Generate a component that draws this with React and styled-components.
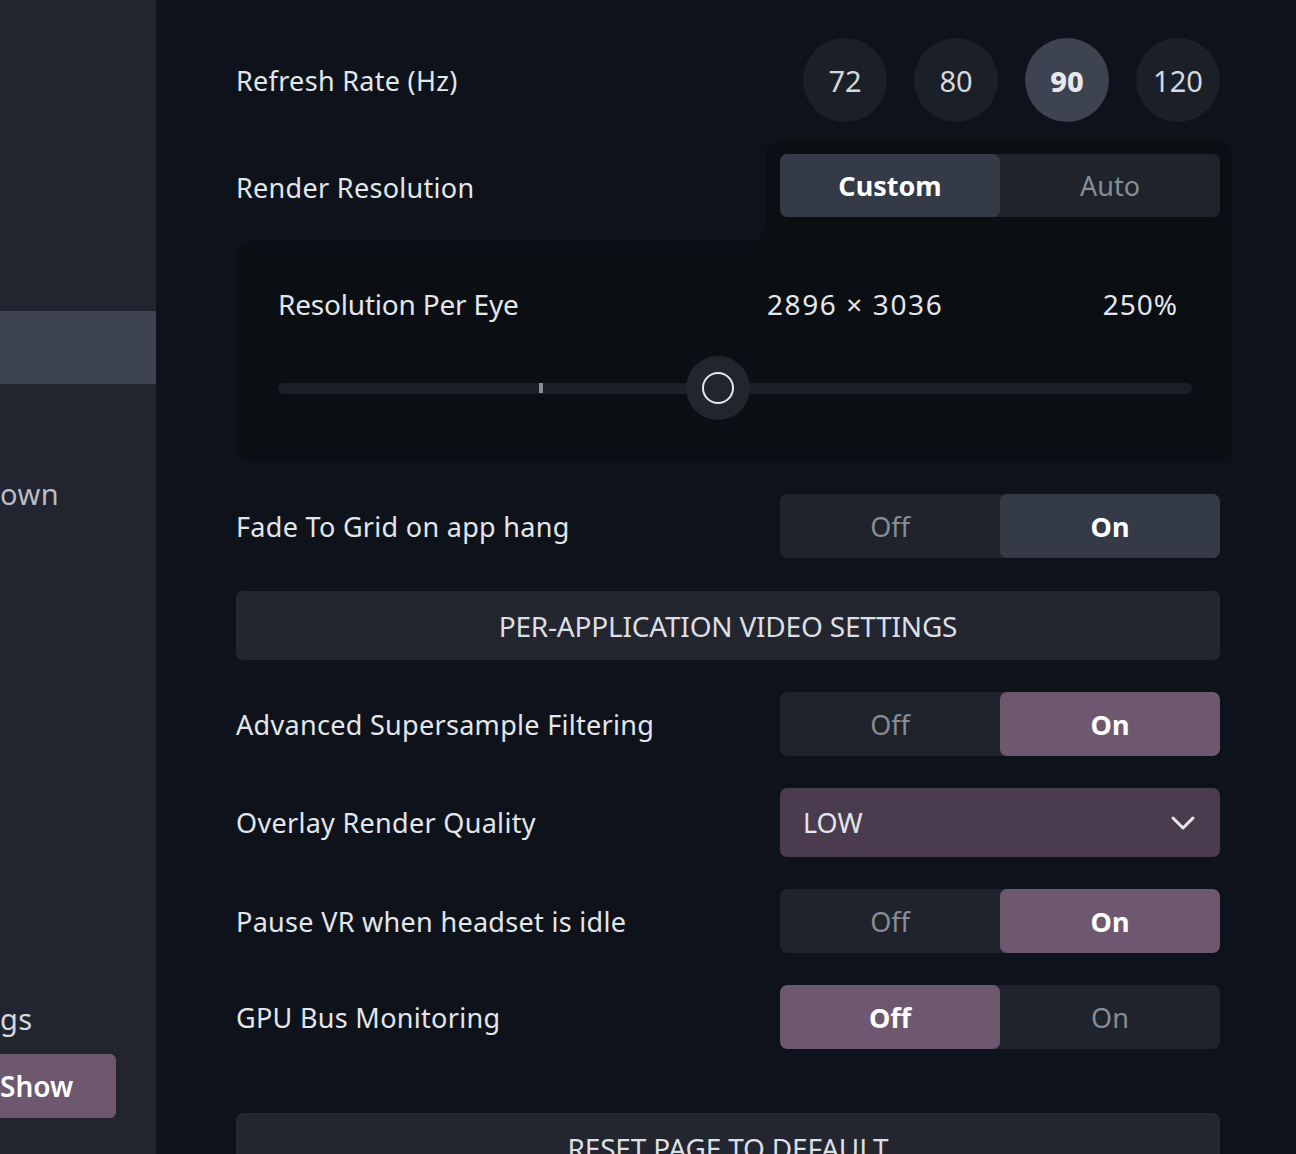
import React from 'react'
import styled, { createGlobalStyle } from 'styled-components'

const GlobalStyle = createGlobalStyle`
	html, body {
		margin: 0;
		padding: 0;
		background: #0e131b;
	}
	body {
		font-family: 'Noto Sans', 'Open Sans', sans-serif;
		color: #e3e6ea;
	}
`

const Page = styled.div`
	display: flex;
	width: 1296px;
	height: 1154px;
	overflow: hidden;
	background: #0e131b;
`

const Sidebar = styled.div`
	width: 156px;
	flex-shrink: 0;
	background: #22252f;
	display: flex;
	flex-direction: column;
	overflow: hidden;
`

const SideItem = styled.div`
	flex-shrink: 0;
	height: ${props => props.h || 73}px;
	background: ${props => (props.active ? '#3d4350' : 'transparent')};
	color: ${props => props.color || '#b9bdc5'};
	font-size: 29px;
	letter-spacing: 0.5px;
	display: flex;
	align-items: center;
	white-space: nowrap;
`

const ShowButton = styled.div`
	flex-shrink: 0;
	width: 116px;
	height: 64px;
	border-radius: 0 6px 6px 0;
	background: #6d586f;
	color: #ffffff;
	font-size: 28px;
	font-weight: 600;
	display: flex;
	align-items: center;
`

const Content = styled.div`
	width: 984px;
	padding: 38px 0 0 80px;
	display: flex;
	flex-direction: column;

	& > * {
		flex-shrink: 0;
	}
`

const Row = styled.div`
	display: flex;
	align-items: center;
	justify-content: space-between;
	margin-bottom: ${props => props.mb ?? 32}px;
`

const Label = styled.div`
	font-size: 27px;
	color: #e3e6ea;
	letter-spacing: 0.3px;
`

const Rates = styled.div`
	display: flex;
	gap: 27px;
`

const Rate = styled.div`
	width: 84px;
	height: 84px;
	border-radius: 50%;
	background: ${props => (props.active ? '#3d4350' : '#1b1f27')};
	color: ${props => (props.active ? '#e6e8ec' : '#d6d9de')};
	font-weight: ${props => (props.active ? 800 : 400)};
	font-size: 29px;
	display: flex;
	align-items: center;
	justify-content: center;
`

const ResRow = styled.div`
	display: flex;
	height: 101px;
`

const ResLabelWrap = styled.div`
	flex: 1;
	display: flex;
	background: #0b0e13;
`

const ResLabelCell = styled.div`
	flex: 1;
	display: flex;
	align-items: center;
	padding-bottom: 7px;
	background: #0e131b;
	border-bottom-right-radius: 16px;
`

const ResControlCell = styled.div`
	width: 466px;
	box-sizing: border-box;
	padding: 14px 12px 24px 14px;
	background: #0b0e13;
	border-radius: 16px 16px 0 0;
	margin-right: -12px;
`

const Segmented = styled.div`
	display: flex;
	height: ${props => props.h || 64}px;
	background: #1e232c;
	border-radius: 7px;
	overflow: hidden;
`

const Segment = styled.div`
	flex: 1;
	display: flex;
	align-items: center;
	justify-content: center;
	font-size: 27px;
	border-radius: 7px;
	background: ${props =>
		props.active ? (props.tone === 'purple' ? '#6d586f' : '#353a47') : 'transparent'};
	color: ${props => (props.active ? '#ffffff' : '#878c95')};
	font-weight: ${props => (props.active ? 700 : 400)};
`

const Panel = styled.div`
	background: #0b0e13;
	border-radius: 16px 0 16px 16px;
	margin-right: -12px;
	padding: 44px 40px 0 42px;
	height: 221px;
	box-sizing: border-box;
	margin-bottom: 32px;
`

const PanelHead = styled.div`
	display: flex;
	align-items: center;
	font-size: 28px;
	letter-spacing: -0.2px;
	color: #e3e6ea;
	height: 38px;
	padding-right: 14px;
`

const HeadName = styled.div`
	width: 489px;
`

const HeadValue = styled.div`
	flex: 1;
	letter-spacing: ${props => props.spacing || 1.6}px;
`

const Slider = styled.div`
	position: relative;
	height: 64px;
	margin-top: 33px;
	display: flex;
	align-items: center;
`

const Track = styled.div`
	flex: 1;
	height: 11px;
	border-radius: 6px;
	background: #1b1f26;
`

const Tick = styled.div`
	position: absolute;
	left: 261px;
	top: 27px;
	width: 4px;
	height: 10px;
	background: #8c8d90;
`

const Thumb = styled.div`
	position: absolute;
	left: 408px;
	top: 0;
	width: 64px;
	height: 64px;
	border-radius: 50%;
	background: #22252e;
	display: flex;
	align-items: center;
	justify-content: center;
`

const ThumbRing = styled.div`
	width: 28px;
	height: 28px;
	border-radius: 50%;
	border: 2px solid #e6e8ec;
`

const Toggle = styled.div`
	width: 440px;
`

const WideButton = styled.div`
	height: 69px;
	border-radius: 7px;
	background: #23262f;
	color: #dcdfe3;
	font-size: 28px;
	letter-spacing: -0.2px;
	display: flex;
	align-items: center;
	justify-content: center;
	margin-bottom: ${props => props.mb ?? 32}px;
`

const Dropdown = styled.div`
	width: 440px;
	height: 69px;
	border-radius: 7px;
	background: #4b3b4e;
	display: flex;
	align-items: center;
	justify-content: space-between;
	padding: 0 24px 0 23px;
	box-sizing: border-box;
	color: #e3e6ea;
	font-size: 27px;
`

const OffOn = ({ value, tone }) => (
	<Toggle>
		<Segmented>
			<Segment active={!value} tone={tone}>Off</Segment>
			<Segment active={value} tone={tone}>On</Segment>
		</Segmented>
	</Toggle>
)

const App = () => {
	return (
		<Page>
			<GlobalStyle />
			<Sidebar>
				<SideItem h={311} />
				<SideItem active />
				<SideItem h={73} />
				<SideItem h={73}>own</SideItem>
				<SideItem h={452} />
				<SideItem h={72} color='#d6d9de'>gs</SideItem>
				<ShowButton>Show</ShowButton>
			</Sidebar>
			<Content>
				<Row mb={18}>
					<Label>Refresh Rate (Hz)</Label>
					<Rates>
						{['72', '80', '90', '120'].map(r => (
							<Rate key={r} active={r === '90'}>{r}</Rate>
						))}
					</Rates>
				</Row>

				<ResRow>
					<ResLabelWrap>
						<ResLabelCell>
							<Label>Render Resolution</Label>
						</ResLabelCell>
					</ResLabelWrap>
					<ResControlCell>
						<Segmented h={63}>
							<Segment active>Custom</Segment>
							<Segment>Auto</Segment>
						</Segmented>
					</ResControlCell>
				</ResRow>

				<Panel>
					<PanelHead>
						<HeadName>Resolution Per Eye</HeadName>
						<HeadValue>2896 × 3036</HeadValue>
						<HeadValue as='div' spacing={1} style={{ flex: 'none' }}>250%</HeadValue>
					</PanelHead>
					<Slider>
						<Track />
						<Tick />
						<Thumb>
							<ThumbRing />
						</Thumb>
					</Slider>
				</Panel>

				<Row mb={33}>
					<Label>Fade To Grid on app hang</Label>
					<OffOn value />
				</Row>

				<WideButton>PER-APPLICATION VIDEO SETTINGS</WideButton>

				<Row>
					<Label>Advanced Supersample Filtering</Label>
					<OffOn value tone='purple' />
				</Row>

				<Row>
					<Label>Overlay Render Quality</Label>
					<Dropdown>
						<span>LOW</span>
						<svg width='26' height='16' viewBox='0 0 26 16' fill='none'>
							<polyline
								points='3,3 13,13 23,3'
								stroke='#e6e8ec'
								strokeWidth='3'
								strokeLinecap='round'
								strokeLinejoin='round'
							/>
						</svg>
					</Dropdown>
				</Row>

				<Row>
					<Label>Pause VR when headset is idle</Label>
					<OffOn value tone='purple' />
				</Row>

				<Row mb={64}>
					<Label>GPU Bus Monitoring</Label>
					<OffOn value={false} tone='purple' />
				</Row>

				<WideButton mb={0}>RESET PAGE TO DEFAULT</WideButton>
			</Content>
		</Page>
	)
}

export default App
